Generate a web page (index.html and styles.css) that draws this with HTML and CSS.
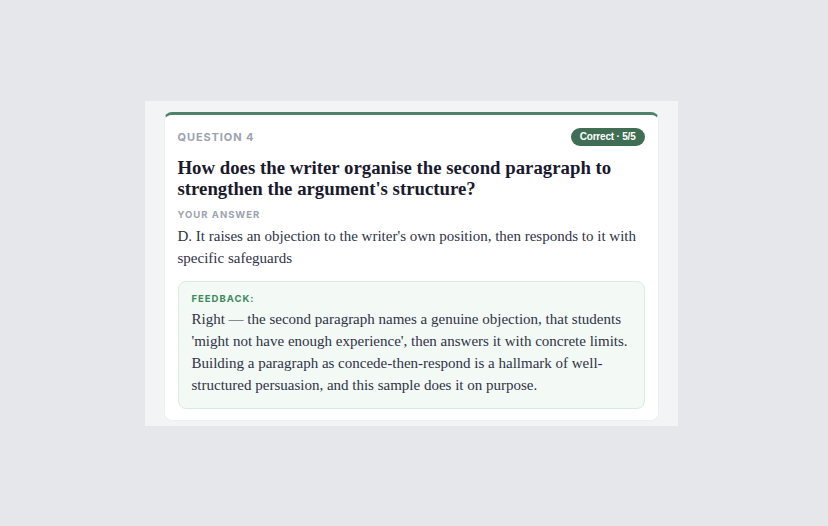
FILE: index.html
```html
<!DOCTYPE html>
<html lang="en">

<head>
    <meta charset="utf-8">
    <meta name="viewport" content="width=device-width, initial-scale=1.0">
    <title>Question 4</title>
    <link rel="stylesheet" href="styles.css">
</head>

<body>
    <section class="panel">
        <article class="kort">
            <div class="kort-top">
                <p class="etiket">QUESTION 4</p>
                <span class="badge">Correct · 5/5</span>
            </div>
            <h2 class="spoergsmaal">How does the writer organise the second paragraph to strengthen the argument's structure?</h2>
            <p class="etiket lille">YOUR ANSWER</p>
            <p class="svar">D. It raises an objection to the writer's own position, then responds to it with specific safeguards</p>
            <div class="feedback">
                <p class="etiket lille groen">FEEDBACK:</p>
                <p class="svar">Right — the second paragraph names a genuine objection, that students 'might not have enough experience', then answers it with concrete limits. Building a paragraph as concede-then-respond is a hallmark of well-structured persuasion, and this sample does it on purpose.</p>
            </div>
        </article>
    </section>
</body>

</html>
```

FILE: styles.css
```css
body {
    margin: 0;
    padding-right: 6px;
    background: #e5e7eb;
    height: 100vh;
    display: flex;
    justify-content: center;
    align-items: center;
    font-family: "Liberation Serif", serif;
}

p {
    margin: 0;
}

.panel {
    background: #f3f4f6;
    width: 495px;
    padding: 11px 19px 5px;
}

.kort {
    background: #fff;
    border: 1px solid #eceef0;
    border-top: 3px solid #4f8268;
    border-radius: 8px;
    padding: 13px 13px 11px 13px;
}

.kort-top {
    display: flex;
    justify-content: space-between;
    align-items: center;
}

.etiket {
    font-family: "Inter", sans-serif;
    font-size: 11px;
    font-weight: 700;
    letter-spacing: 0.9px;
    color: #9ca3af;
}

.etiket.lille {
    font-size: 9.5px;
    letter-spacing: 1px;
}

.etiket.groen {
    color: #3d8a5a;
}

.badge {
    background: #3f6e55;
    color: #fff;
    font-family: "Liberation Sans", sans-serif;
    font-size: 10px;
    font-weight: 700;
    letter-spacing: -0.2px;
    border-radius: 10px;
    padding: 3px 9px;
    line-height: 12px;
}

.spoergsmaal {
    font-size: 18.8px;
    line-height: 21px;
    color: #1a1a2e;
    margin: 11px 0 10px;
}

.svar {
    font-size: 15px;
    line-height: 22px;
    color: #2f3347;
    margin-top: 5px;
}

.feedback {
    background: #f3f9f5;
    border: 1px solid #dcebe1;
    border-radius: 8px;
    padding: 11px 13px 12px;
    margin-top: 12px;
}

.feedback .svar {
    margin-top: 4px;
}
```
